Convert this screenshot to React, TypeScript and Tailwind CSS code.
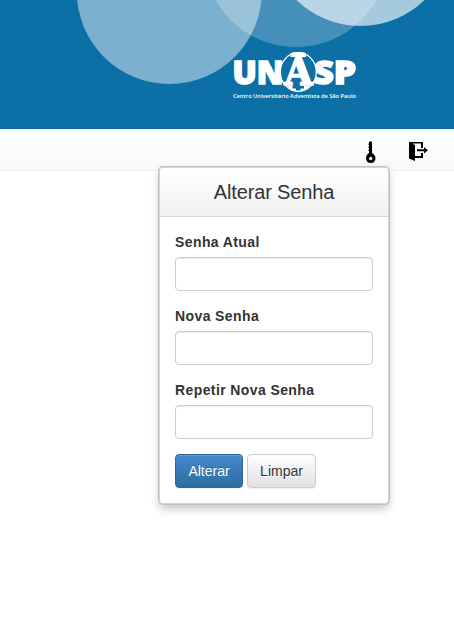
const fields = ["Senha Atual", "Nova Senha", "Repetir Nova Senha"];

function Banner() {
  return (
    <svg className="block h-[129px] w-full" viewBox="0 0 454 129" role="img" aria-label="UNASP">
      <rect width="454" height="129" fill="#0c6fa5" />
      <circle cx="169.3" cy="-8.5" r="92.5" fill="#fff" fillOpacity=".457" />
      <circle cx="296" cy="-45.3" r="92.3" fill="#fff" fillOpacity=".235" />
      <circle cx="360.5" cy="-66" r="92" fill="#fff" fillOpacity=".63" />
      <g fill="#fff" fontFamily="Open Sans, sans-serif" fontWeight="800">
        <text x="232.5" y="84.2" fontSize="32" textLength="51" lengthAdjust="spacingAndGlyphs" stroke="#fff" strokeWidth="1.5">UN</text>
        <text x="313.5" y="84.2" fontSize="32" textLength="42.5" lengthAdjust="spacingAndGlyphs" stroke="#fff" strokeWidth="1.5">SP</text>
      </g>
      <ellipse cx="298.3" cy="72" rx="18" ry="19.3" fill="#0c6fa5" stroke="#fff" strokeWidth="1.3" />
      <path d="M290.5 53Q298 51 306 53V57H290.5Z M287 86H310Q305 91 298 91.8Q291 91 287 86Z" fill="#fff" />
      <text x="284.5" y="84.5" fill="#fff" stroke="#fff" strokeWidth="1.6" fontFamily="DejaVu Serif, serif" fontWeight="700" fontSize="40" textLength="28" lengthAdjust="spacingAndGlyphs">A</text>
      <path d="M292.5 86H304V88.5H300.5V90.5H296V88.5H292.5Z" fill="#0c6fa5" />
      <text x="233" y="97.8" fill="#fff" fontFamily="Open Sans, sans-serif" fontWeight="600" fontSize="5.9" textLength="123" lengthAdjust="spacingAndGlyphs">Centro Universitário Adventista de São Paulo</text>
    </svg>
  );
}

export default function App() {
  return (
    <div className="h-[633px] w-full overflow-hidden bg-white font-['Liberation_Sans',Arial,sans-serif] text-[14px] leading-5 text-[#333]">
      <Banner />
      <nav className="flex h-[42px] items-start justify-end gap-[31px] border-b border-[#f2f2f2] bg-gradient-to-b from-white to-[#f8f8f8] pr-[26px] pt-3">
        <svg className="h-[22px] w-3" viewBox="0 0 12 22" aria-label="Chave">
          <path d="M4 1Q5.5 -.5 7 1V12Q10.5 14 10.5 17.5Q10 22 5.7 22Q1.5 22 1 17.5Q1 14 4 12V10H3.5V8.5H4V7H3.5V5.5H4V4H3.5V2.5H4ZM5.7 15.8A1.7 1.7 0 1 0 5.7 19.2A1.7 1.7 0 1 0 5.7 15.8Z" fill="#000" fillRule="evenodd" />
        </svg>
        <svg className="h-5 w-5" viewBox="0 0 20 20" aria-label="Sair">
          <path d="M1 1H15V7H13V2.5H4.5L7 4V20L1 17.5Z M7 15H13V12H15V17H7Z M9 8.2H16V6L20 9.2L16 12.4V10.2H9Z" fill="#000" />
        </svg>
      </nav>
      <section className="relative -mt-1 ml-[159px] h-[337px] w-[230px] rounded-[4px] border border-[#d6d6d6] bg-white shadow-[0_0_0_1px_#c1c1c1,0_5px_10px_rgba(0,0,0,0.22)]">
        <h1 className="flex h-[49px] items-center justify-center rounded-t-[3px] border-b border-[#d8d8d8] bg-gradient-to-b from-white to-[#f1f1f1] text-[20px] tracking-[-0.15px]">
          Alterar Senha
        </h1>
        <form className="px-[15px] pt-[15px]">
          {fields.map((label) => (
            <label key={label} className="mb-[15px] block font-bold tracking-[0.4px]">
              {label}
              <input
                type="password"
                className="mt-[5px] block h-[34px] w-full rounded-[4px] border border-[#ccc] bg-white px-3 shadow-[inset_0_1px_1px_rgba(0,0,0,0.075)]"
              />
            </label>
          ))}
          <div className="flex gap-1">
            <button type="button" className="h-[34px] w-[68px] rounded-[4px] border border-[#2b669a] bg-gradient-to-b from-[#428bca] to-[#2d6ca2] text-white shadow-[inset_0_1px_0_rgba(255,255,255,0.15),0_1px_1px_rgba(0,0,0,0.075)] [text-shadow:0_-1px_0_rgba(0,0,0,0.2)]">
              Alterar
            </button>
            <button type="button" className="h-[34px] w-[69px] rounded-[4px] border border-[#ccc] bg-gradient-to-b from-white to-[#e0e0e0] shadow-[inset_0_1px_0_rgba(255,255,255,0.15),0_1px_1px_rgba(0,0,0,0.075)] [text-shadow:0_1px_0_#fff]">
              Limpar
            </button>
          </div>
        </form>
      </section>
    </div>
  );
}
